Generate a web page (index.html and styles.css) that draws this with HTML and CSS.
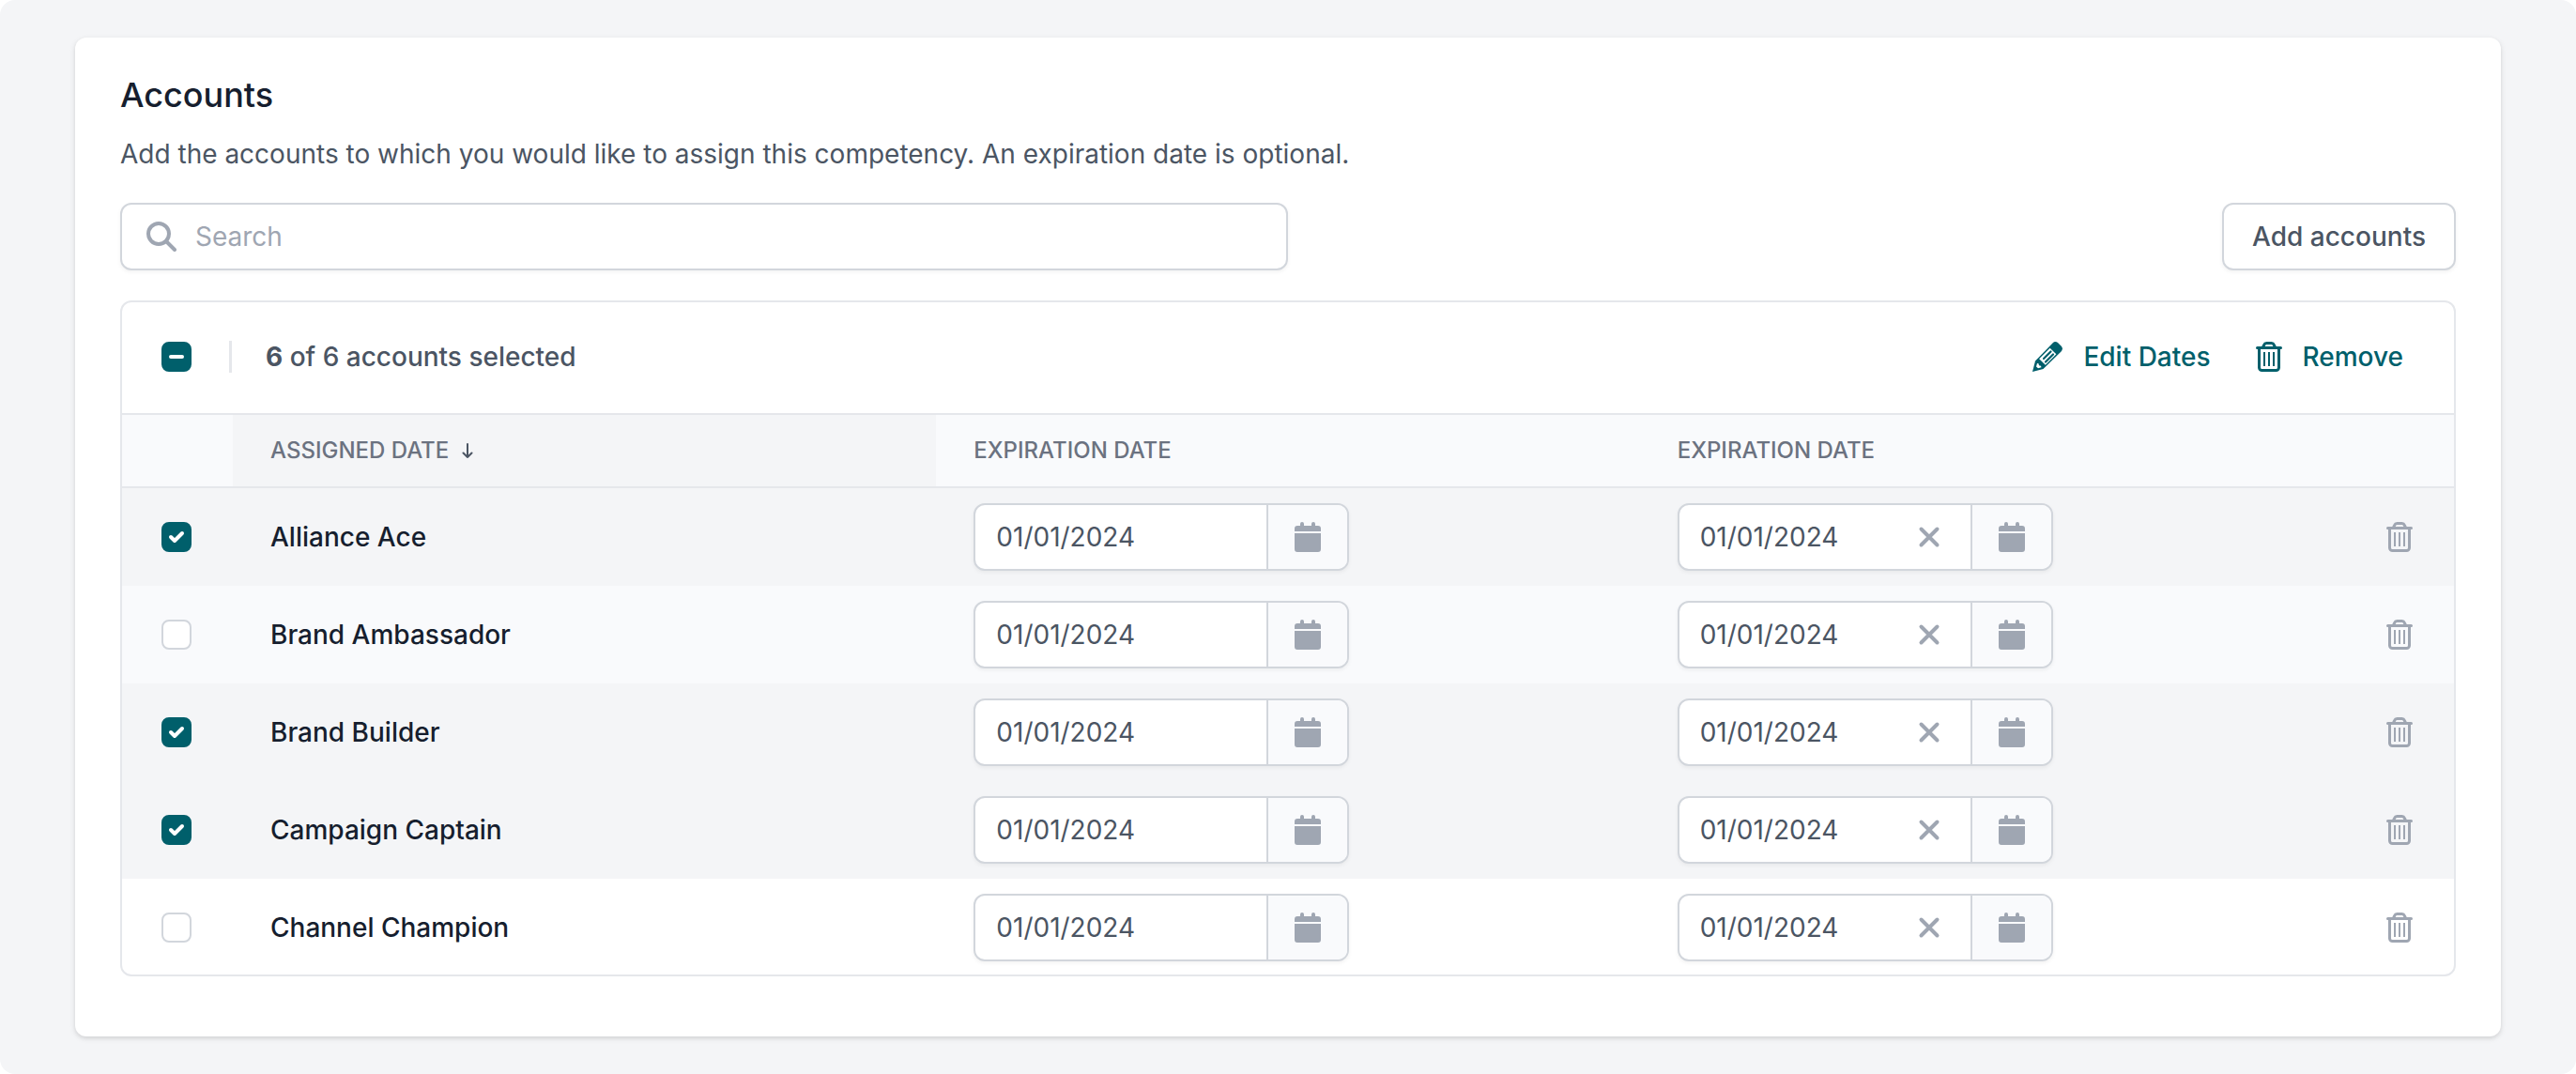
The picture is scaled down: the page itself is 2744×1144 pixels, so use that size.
FILE: index.html
```
<!DOCTYPE html>
<html lang="en">
<head>
<meta charset="utf-8">
<title>Accounts</title>
<link rel="stylesheet" href="styles.css">
</head>
<body>
<svg class="sprite" aria-hidden="true">
  <symbol id="icon-search" viewBox="0 0 32 32"><circle cx="13" cy="13" r="11" fill="none" stroke="currentColor" stroke-width="4"/><path d="M21 21l9 9" fill="none" stroke="currentColor" stroke-width="4" stroke-linecap="round"/></symbol>
  <symbol id="icon-trash" viewBox="0 0 28 32"><path d="M1.500 6.500h25M7.500 6l1.200-2.600a3 3 0 0 1 2.700-1.900h5.200a3 3 0 0 1 2.700 1.900L20.500 6M3.500 7v20.500a3 3 0 0 0 3 3h15a3 3 0 0 0 3-3V7" fill="none" stroke="currentColor" stroke-width="3" stroke-linecap="round"/><path d="M9 11v15M14 11v15M19 11v15" fill="none" stroke="currentColor" stroke-width="2"/></symbol>
  <symbol id="icon-pencil" viewBox="0 0 32 32"><path d="M0 32l3-11.500L21.500 1.500q2.500-2.500 5.500-.5l4 4q2 3-.5 5.500L11.500 29z" fill="currentColor"/><path d="M10.500 21.500L22 10" fill="none" stroke="#fff" stroke-width="9.500"/><path d="M5 23l1.500.3.5 2 2 .5.500 1.500-3.500 1-2-1.800z" fill="#fff"/><path d="M5.500 20.500L9 23l2.500 4" fill="none" stroke="currentColor" stroke-width="2"/><path d="M12 18l7.500-7.500M14 21.500l8-8" fill="none" stroke="currentColor" stroke-width="2.200" stroke-linecap="round"/></symbol>
  <symbol id="icon-calendar" viewBox="0 0 28 32"><path d="M0 10V7a3 3 0 0 1 3-3h3V2a2 2 0 0 1 4 0v2h8V2a2 2 0 0 1 4 0v2h3a3 3 0 0 1 3 3v3zM0 12h28v17a3 3 0 0 1-3 3H3a3 3 0 0 1-3-3z" fill="currentColor"/></symbol>
  <symbol id="icon-clear" viewBox="0 0 32 32"><path d="M7.500 7.500l17 17M24.500 7.500l-17 17" fill="none" stroke="currentColor" stroke-width="4" stroke-linecap="round"/></symbol>
  <symbol id="icon-sort" viewBox="0 0 12 16"><path d="M6 1v14M1.500 10.500L6 15l4.500-4.500" fill="none" stroke="currentColor" stroke-width="2" stroke-linecap="round" stroke-linejoin="round"/></symbol>
</svg>
<main class="page">
  <section class="card">
    <h1 class="card-title">Accounts</h1>
    <p class="card-description">Add the accounts to which you would like to assign this competency. An expiration date is optional.</p>
    <div class="actions">
      <label class="search">
        <svg class="icon icon-muted"><use href="#icon-search"/></svg>
        <input class="search-input" type="search" placeholder="Search" aria-label="Search">
      </label>
      <button class="button" type="button">Add accounts</button>
    </div>
    <div class="panel">
      <div class="toolbar">
        <input class="checkbox checkbox-mixed" type="checkbox" aria-label="Select all accounts">
        <span class="divider"></span>
        <p class="selection"><strong>6</strong> of 6 accounts selected</p>
        <button class="link-button" type="button"><svg class="icon"><use href="#icon-pencil"/></svg>Edit Dates</button>
        <button class="link-button" type="button"><svg class="icon-slim"><use href="#icon-trash"/></svg>Remove</button>
      </div>
      <table class="table">
        <colgroup><col class="col-edge"><col><col><col><col class="col-edge"></colgroup>
        <thead>
          <tr>
            <td></td>
            <th class="sorted" scope="col" aria-sort="descending"><span class="heading">Assigned date <svg class="icon-sort"><use href="#icon-sort"/></svg></span></th>
            <th scope="col">Expiration date</th>
            <th scope="col">Expiration date</th>
            <td></td>
          </tr>
        </thead>
        <tbody>
          <tr class="selected">
            <td class="edge"><input class="checkbox" type="checkbox" aria-label="Select Alliance Ace" checked></td>
            <td class="name">Alliance Ace</td>
            <td><div class="date"><input class="date-input" type="text" value="01/01/2024" aria-label="First expiration date"><button class="date-open" type="button" aria-label="Open calendar"><svg class="icon-slim"><use href="#icon-calendar"/></svg></button></div></td>
            <td><div class="date"><input class="date-input" type="text" value="01/01/2024" aria-label="Second expiration date"><button class="icon-button date-clear" type="button" aria-label="Clear date"><svg class="icon"><use href="#icon-clear"/></svg></button><button class="date-open" type="button" aria-label="Open calendar"><svg class="icon-slim"><use href="#icon-calendar"/></svg></button></div></td>
            <td class="edge"><button class="icon-button row-remove" type="button" aria-label="Remove Alliance Ace"><svg class="icon"><use href="#icon-trash"/></svg></button></td>
          </tr>
          <tr>
            <td class="edge"><input class="checkbox" type="checkbox" aria-label="Select Brand Ambassador"></td>
            <td class="name">Brand Ambassador</td>
            <td><div class="date"><input class="date-input" type="text" value="01/01/2024" aria-label="First expiration date"><button class="date-open" type="button" aria-label="Open calendar"><svg class="icon-slim"><use href="#icon-calendar"/></svg></button></div></td>
            <td><div class="date"><input class="date-input" type="text" value="01/01/2024" aria-label="Second expiration date"><button class="icon-button date-clear" type="button" aria-label="Clear date"><svg class="icon"><use href="#icon-clear"/></svg></button><button class="date-open" type="button" aria-label="Open calendar"><svg class="icon-slim"><use href="#icon-calendar"/></svg></button></div></td>
            <td class="edge"><button class="icon-button row-remove" type="button" aria-label="Remove Brand Ambassador"><svg class="icon"><use href="#icon-trash"/></svg></button></td>
          </tr>
          <tr class="selected">
            <td class="edge"><input class="checkbox" type="checkbox" aria-label="Select Brand Builder" checked></td>
            <td class="name">Brand Builder</td>
            <td><div class="date"><input class="date-input" type="text" value="01/01/2024" aria-label="First expiration date"><button class="date-open" type="button" aria-label="Open calendar"><svg class="icon-slim"><use href="#icon-calendar"/></svg></button></div></td>
            <td><div class="date"><input class="date-input" type="text" value="01/01/2024" aria-label="Second expiration date"><button class="icon-button date-clear" type="button" aria-label="Clear date"><svg class="icon"><use href="#icon-clear"/></svg></button><button class="date-open" type="button" aria-label="Open calendar"><svg class="icon-slim"><use href="#icon-calendar"/></svg></button></div></td>
            <td class="edge"><button class="icon-button row-remove" type="button" aria-label="Remove Brand Builder"><svg class="icon"><use href="#icon-trash"/></svg></button></td>
          </tr>
          <tr class="selected">
            <td class="edge"><input class="checkbox" type="checkbox" aria-label="Select Campaign Captain" checked></td>
            <td class="name">Campaign Captain</td>
            <td><div class="date"><input class="date-input" type="text" value="01/01/2024" aria-label="First expiration date"><button class="date-open" type="button" aria-label="Open calendar"><svg class="icon-slim"><use href="#icon-calendar"/></svg></button></div></td>
            <td><div class="date"><input class="date-input" type="text" value="01/01/2024" aria-label="Second expiration date"><button class="icon-button date-clear" type="button" aria-label="Clear date"><svg class="icon"><use href="#icon-clear"/></svg></button><button class="date-open" type="button" aria-label="Open calendar"><svg class="icon-slim"><use href="#icon-calendar"/></svg></button></div></td>
            <td class="edge"><button class="icon-button row-remove" type="button" aria-label="Remove Campaign Captain"><svg class="icon"><use href="#icon-trash"/></svg></button></td>
          </tr>
          <tr>
            <td class="edge"><input class="checkbox" type="checkbox" aria-label="Select Channel Champion"></td>
            <td class="name">Channel Champion</td>
            <td><div class="date"><input class="date-input" type="text" value="01/01/2024" aria-label="First expiration date"><button class="date-open" type="button" aria-label="Open calendar"><svg class="icon-slim"><use href="#icon-calendar"/></svg></button></div></td>
            <td><div class="date"><input class="date-input" type="text" value="01/01/2024" aria-label="Second expiration date"><button class="icon-button date-clear" type="button" aria-label="Clear date"><svg class="icon"><use href="#icon-clear"/></svg></button><button class="date-open" type="button" aria-label="Open calendar"><svg class="icon-slim"><use href="#icon-calendar"/></svg></button></div></td>
            <td class="edge"><button class="icon-button row-remove" type="button" aria-label="Remove Channel Champion"><svg class="icon"><use href="#icon-trash"/></svg></button></td>
          </tr>
        </tbody>
      </table>
    </div>
  </section>
</main>
</body>
</html>
```
FILE: styles.css
```
:root {
  --teal: #005f6b;
  --ink: #161e2e;
  --text: #4b5563;
  --heading: #6b7280;
  --muted: #9fa6b2;
  --border: #d2d6dc;
  --line: #e5e7eb;
  --gray-100: #f4f5f7;
  --gray-50: #f9fafc;
}

* { box-sizing: border-box; }

body {
  margin: 0;
  background: #fff;
  color: var(--text);
  font: 400 28px/40px Inter, "Liberation Sans", sans-serif;
}

input, button { font: inherit; color: inherit; }

button { margin: 0; padding: 0; border: 0; background: none; cursor: pointer; }

.sprite { display: none; }

.page {
  min-height: 100vh;
  padding: 40px 80px;
  border-radius: 16px;
  background: var(--gray-100);
}

.card {
  padding: 40px 48px 64px;
  border-radius: 12px;
  background: #fff;
  box-shadow: 0 2px 6px rgba(0, 0, 0, .1), 0 2px 4px rgba(0, 0, 0, .06);
}

.card-title {
  margin: 0 0 22px;
  color: var(--ink);
  font-size: 36px;
  font-weight: 500;
  line-height: 42px;
}

.card-description { margin: 0 0 32px; }

.actions {
  display: flex;
  justify-content: space-between;
  align-items: center;
  margin-bottom: 32px;
}

.search, .button, .date {
  height: 72px;
  border: 2px solid var(--border);
  border-radius: 12px;
  background: #fff;
  box-shadow: 0 2px 4px rgba(0, 0, 0, .05);
}

.search {
  display: flex;
  align-items: center;
  gap: 20px;
  width: 50%;
  padding: 0 26px;
}

.search-input {
  flex: 1;
  min-width: 0;
  padding: 0;
  border: 0;
  outline: 0;
  background: none;
  appearance: none;
}

.search-input::placeholder { color: var(--muted); opacity: 1; }

.button { padding: 0 30px; font-weight: 500; }

.icon { display: block; flex: none; width: 32px; height: 32px; }

.icon-slim { display: block; flex: none; width: 28px; height: 32px; }

.icon-muted { color: var(--muted); }

.icon-sort { width: 12px; height: 16px; color: var(--text); }

.panel {
  overflow: hidden;
  border: 2px solid var(--line);
  border-radius: 12px;
}

.toolbar {
  display: flex;
  align-items: center;
  height: 120px;
  padding: 0 54px 2px 42px;
  border-bottom: 2px solid var(--line);
  font-weight: 500;
}

.divider { width: 3px; height: 34px; margin: 0 36px 0 40px; background: var(--line); }

.selection { flex: 1; margin: 0; }

.selection strong { font-weight: 700; }

.link-button {
  display: flex;
  align-items: center;
  gap: 22px;
  color: var(--teal);
  font-weight: 500;
}

.link-button + .link-button { margin-left: 48px; }

.checkbox {
  display: block;
  width: 32px;
  height: 32px;
  margin: 0;
  border: 2px solid var(--border);
  border-radius: 8px;
  background: #fff center / 32px 32px no-repeat;
  background-origin: border-box;
  appearance: none;
}

.checkbox:checked, .checkbox-mixed { border-color: var(--teal); background-color: var(--teal); }

.checkbox:checked {
  background-image: url("data:image/svg+xml,%3Csvg xmlns='http://www.w3.org/2000/svg' viewBox='0 0 32 32'%3E%3Cpath d='M10 16l4 4 8-8' fill='none' stroke='white' stroke-width='4' stroke-linecap='round' stroke-linejoin='round'/%3E%3C/svg%3E");
}

.checkbox-mixed {
  background-image: url("data:image/svg+xml,%3Csvg xmlns='http://www.w3.org/2000/svg' viewBox='0 0 32 32'%3E%3Cpath d='M10 16h12' fill='none' stroke='white' stroke-width='4' stroke-linecap='round'/%3E%3C/svg%3E");
}

.table { width: 100%; border-collapse: separate; border-spacing: 0; table-layout: fixed; }

.col-edge { width: 118px; }

.table td, .table th { padding: 16px 40px; text-align: left; vertical-align: middle; }

.table thead td, .table thead th {
  height: 78px;
  padding: 0 40px;
  border-bottom: 2px solid var(--line);
  background: var(--gray-50);
  color: var(--heading);
  font-size: 24px;
  font-weight: 500;
  line-height: 32px;
  text-transform: uppercase;
}

.table thead .sorted { background: var(--gray-100); }

.heading { display: flex; align-items: center; gap: 14px; }

.table tbody tr:nth-child(even) { background: var(--gray-50); }

.table tbody .selected, .table tbody .selected:nth-child(even) { background: var(--gray-100); }

.table tbody tr:last-child td { padding-bottom: 14px; }

.table .edge { padding-left: 42px; padding-right: 42px; }

.table .name { color: var(--ink); font-weight: 500; }

.date { display: flex; align-items: center; width: 400px; overflow: hidden; }

.date-input {
  flex: 1;
  min-width: 0;
  height: 100%;
  padding: 0 22px;
  border: 0;
  outline: 0;
  background: none;
}

.icon-button { display: block; color: var(--muted); }

.row-remove { margin-left: auto; }

.date-clear { margin-right: 28px; }

.date-open {
  display: grid;
  place-items: center;
  width: 86px;
  height: 100%;
  border-left: 2px solid var(--border);
  background: var(--gray-50);
  color: var(--muted);
}
```
